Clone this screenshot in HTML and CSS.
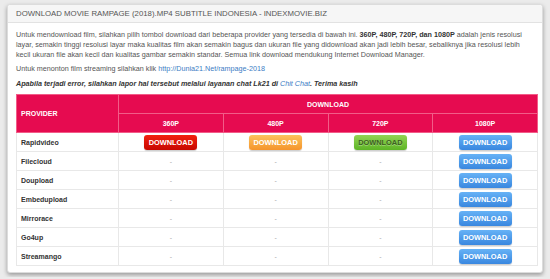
FILE: index.html
```html
<!DOCTYPE html>
<html lang="id">
<head>
    <meta charset="UTF-8">
    <meta name="viewport" content="width=device-width, initial-scale=1.0">
    <title>Download Movie Rampage (2018)</title>
    <link rel="stylesheet" href="styles.css">
</head>
<body>
    <div class="panel">
        <div class="panel-title">DOWNLOAD MOVIE RAMPAGE (2018).MP4 SUBTITLE INDONESIA - INDEXMOVIE.BIZ</div>
        <div class="panel-body">
            <p class="intro">Untuk mendownload film, silahkan pilih tombol download dari beberapa provider yang tersedia di bawah ini. <b>360P, 480P, 720P, dan 1080P</b> adalah jenis resolusi<br>
            layar, semakin tinggi resolusi layar maka kualitas film akan semakin bagus dan ukuran file yang didownload akan jadi lebih besar, sebaliknya jika resolusi lebih<br>
            kecil ukuran file akan kecil dan kualitas gambar semakin standar. Semua link download mendukung Internet Download Manager.</p>
            <p class="stream">Untuk menonton film streaming silahkan klik <a href="#">http://Dunia21.Net/rampage-2018</a></p>
            <p class="notice">Apabila terjadi error, silahkan lapor hal tersebut melalui layanan chat Lk21 di <a href="#">Chit Chat</a>. Terima kasih</p>

            <table class="dl-table">
                <colgroup>
                    <col class="col-provider">
                    <col><col><col><col>
                </colgroup>
                <thead>
                    <tr>
                        <th rowspan="2" class="th-provider">PROVIDER</th>
                        <th colspan="4">DOWNLOAD</th>
                    </tr>
                    <tr>
                        <th>360P</th>
                        <th>480P</th>
                        <th>720P</th>
                        <th>1080P</th>
                    </tr>
                </thead>
                <tbody>
                    <tr>
                        <td class="name">Rapidvideo</td>
                        <td><a class="btn btn-red" href="#">DOWNLOAD</a></td>
                        <td><a class="btn btn-orange" href="#">DOWNLOAD</a></td>
                        <td><a class="btn btn-green" href="#">DOWNLOAD</a></td>
                        <td><a class="btn btn-blue" href="#">DOWNLOAD</a></td>
                    </tr>
                    <tr>
                        <td class="name">Filecloud</td>
                        <td class="none">-</td><td class="none">-</td><td class="none">-</td>
                        <td><a class="btn btn-blue" href="#">DOWNLOAD</a></td>
                    </tr>
                    <tr>
                        <td class="name">Doupload</td>
                        <td class="none">-</td><td class="none">-</td><td class="none">-</td>
                        <td><a class="btn btn-blue" href="#">DOWNLOAD</a></td>
                    </tr>
                    <tr>
                        <td class="name">Embedupload</td>
                        <td class="none">-</td><td class="none">-</td><td class="none">-</td>
                        <td><a class="btn btn-blue" href="#">DOWNLOAD</a></td>
                    </tr>
                    <tr>
                        <td class="name">Mirrorace</td>
                        <td class="none">-</td><td class="none">-</td><td class="none">-</td>
                        <td><a class="btn btn-blue" href="#">DOWNLOAD</a></td>
                    </tr>
                    <tr>
                        <td class="name">Go4up</td>
                        <td class="none">-</td><td class="none">-</td><td class="none">-</td>
                        <td><a class="btn btn-blue" href="#">DOWNLOAD</a></td>
                    </tr>
                    <tr>
                        <td class="name">Streamango</td>
                        <td class="none">-</td><td class="none">-</td><td class="none">-</td>
                        <td><a class="btn btn-blue" href="#">DOWNLOAD</a></td>
                    </tr>
                </tbody>
            </table>
        </div>
    </div>
</body>
</html>
```

FILE: styles.css
```css
body {
    font-family: "Liberation Sans", Arial, sans-serif;
    margin: 0;
    padding: 4px 7px;
    background-color: #ebebeb;
    color: #555;
}
.panel {
    width: 534px;
    background-color: #fff;
    border: 1px solid #dcdcdc;
    border-radius: 3px;
    box-shadow: 0 2px 4px rgba(0, 0, 0, 0.35);
}
.panel-title {
    height: 17px;
    line-height: 18px;
    padding-left: 8px;
    font-size: 7.8px;
    color: #555;
    background-color: #f6f6f6;
    border-bottom: 1px solid #e2e2e2;
    border-radius: 3px 3px 0 0;
}
.panel-body {
    padding: 7px 2px 6px 8px;
}
.panel-body p {
    margin: 0;
    font-size: 7.2px;
    line-height: 10px;
}
.panel-body p.intro {
    white-space: nowrap;
}
.intro b {
    color: #333;
}
.stream {
    margin-top: 4px !important;
}
.notice {
    margin-top: 5px !important;
    font-weight: bold;
    font-style: italic;
    color: #333;
}
.panel-body a {
    color: #3b7cc4;
    text-decoration: none;
}
.notice a {
    font-weight: normal;
}
.dl-table {
    margin-top: 5px;
    width: 522px;
    border-collapse: collapse;
    table-layout: fixed;
    font-size: 7px;
}
.col-provider {
    width: 102px;
}
.dl-table th {
    height: 18px;
    padding: 0;
    background-color: #e60b50;
    color: #fff;
    font-weight: bold;
    text-align: center;
    border: 1px solid #f25c88;
}
.dl-table th.th-provider {
    text-align: left;
    padding-left: 4px;
}
.dl-table td {
    height: 18px;
    padding: 0;
    text-align: center;
    border: 1px solid #e8e8e8;
}
.dl-table td.name {
    text-align: left;
    padding-left: 4px;
    font-weight: bold;
    color: #333;
}
.dl-table td.none {
    color: #aaa;
}
.btn {
    display: inline-block;
    vertical-align: middle;
    width: 53px;
    height: 15px;
    line-height: 15px;
    border-radius: 3px;
    font-size: 7.4px;
    font-weight: bold;
    box-shadow: 0 1px 1px rgba(0, 0, 0, 0.2);
}
.panel-body a.btn {
    color: #fff;
}
.btn-red {
    background: linear-gradient(#f2210f, #c70800);
}
.btn-orange {
    background: linear-gradient(#fcc35c, #f5942c);
}
.btn-green {
    background: linear-gradient(#92d453, #5db426);
}
.panel-body a.btn-green {
    color: #3e5f22;
    text-shadow: 0 1px 0 rgba(255, 255, 255, 0.3);
}
.btn-blue {
    background: linear-gradient(#66b2f6, #3987df);
}
```
